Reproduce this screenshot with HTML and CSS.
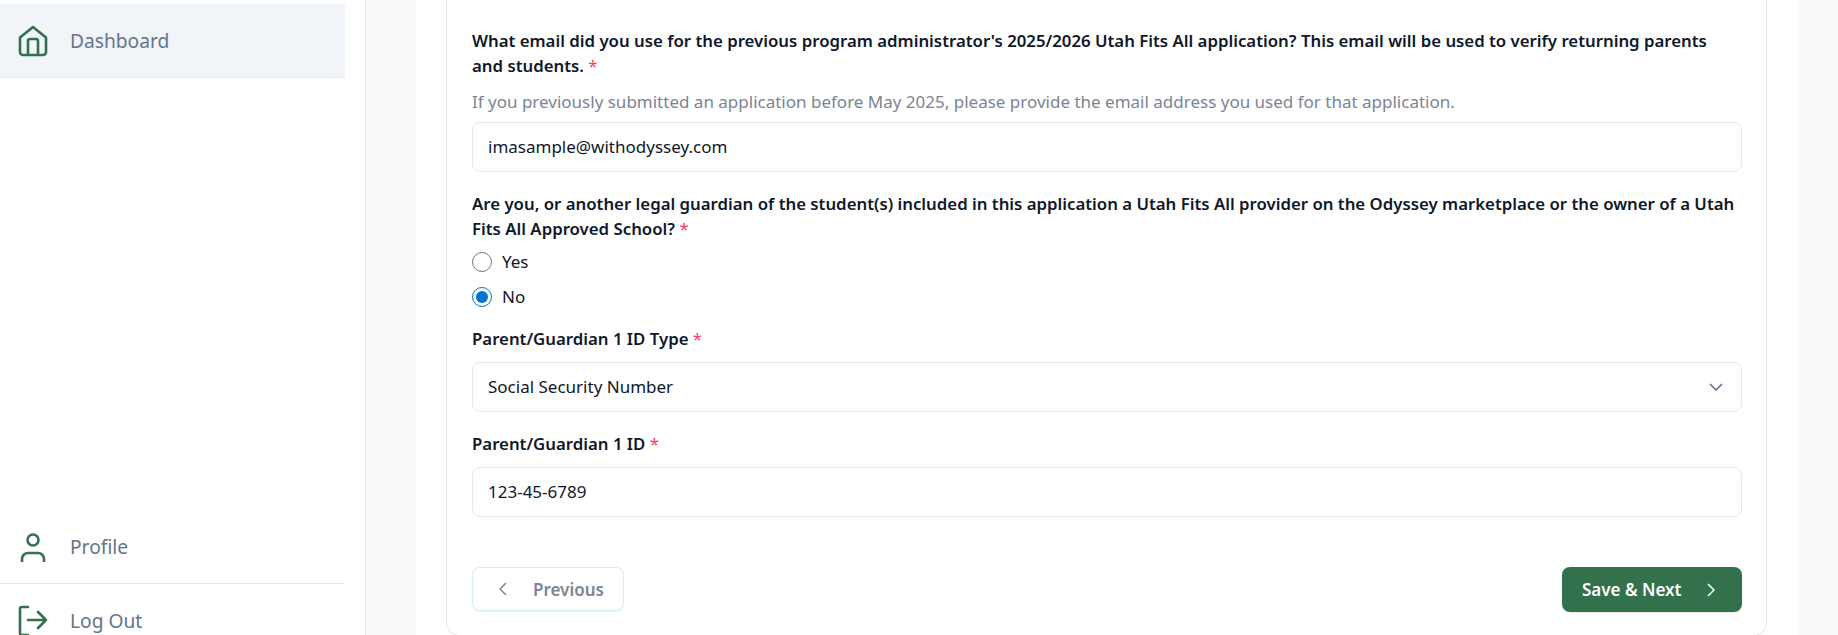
FILE: index.html
```html
<!DOCTYPE html>
<html>
	<head>
		<meta charset="utf-8">
		<title>Application</title>
		<link rel="stylesheet" href="styles.css">
	</head>
	<body>
		<div class="page">
			<aside class="sidebar">
				<a class="nav-item active" href="#">
					<svg class="nav-icon" width="30" height="32" viewBox="0 0 30 32" fill="none" stroke="#33714c" stroke-width="2.6" stroke-linejoin="round">
						<path d="M2 12.5 15 2l13 10.500V27a3 3 0 0 1-3 3H5a3 3 0 0 1-3-3z"/>
						<path d="M10 30V16a2 2 0 0 1 2-2h6a2 2 0 0 1 2 2V30"/>
					</svg>
					<span>Dashboard</span>
				</a>
				<div class="nav-bottom">
					<a class="nav-item" href="#">
						<svg class="nav-icon" width="30" height="32" viewBox="0 0 30 32" fill="none" stroke="#33714c" stroke-width="2.600">
							<circle cx="15" cy="9" r="5.500"/>
							<path d="M4 31v-3a6 6 0 0 1 6-6h10a6 6 0 0 1 6 6v3"/>
						</svg>
						<span>Profile</span>
					</a>
					<a class="nav-item" href="#">
						<svg class="nav-icon" width="30" height="32" viewBox="0 0 30 32" fill="none" stroke="#33714c" stroke-width="2.600" stroke-linecap="round" stroke-linejoin="round">
							<path d="M10 3H4a2 2 0 0 0-2 2v24a2 2 0 0 0 2 2h6"/>
							<path d="M10 16h18M20 8l8 8-8 8"/>
						</svg>
						<span>Log Out</span>
					</a>
				</div>
			</aside>
			<main class="main">
				<div class="content">
					<form class="card">
						<div class="field first">
							<label class="label">What email did you use for the previous program administrator's 2025/2026 Utah Fits All application? This email will be used to verify returning parents and students. <span class="req">*</span></label>
							<p class="hint">If you previously submitted an application before May 2025, please provide the email address you used for that application.</p>
							<input class="control" type="text" value="imasample@withodyssey.com">
						</div>
						<div class="field">
							<label class="label">Are you, or another legal guardian of the student(s) included in this application a Utah Fits All provider on the Odyssey marketplace or the owner of a Utah Fits All Approved School? <span class="req">*</span></label>
							<label class="radio"><input type="radio" name="provider"> Yes</label>
							<label class="radio"><input type="radio" name="provider" checked> No</label>
						</div>
						<div class="field tight">
							<label class="label">Parent/Guardian 1 ID Type <span class="req">*</span></label>
							<div class="select-wrap">
								<select class="control">
									<option>Social Security Number</option>
								</select>
								<svg class="chevron" width="14" height="8" viewBox="0 0 14 8" fill="none" stroke="#5b6b85" stroke-width="1.500">
									<path d="M1 1l6 6 6-6"/>
								</svg>
							</div>
						</div>
						<div class="field id-field">
							<label class="label">Parent/Guardian 1 ID <span class="req">*</span></label>
							<input class="control" type="text" value="123-45-6789">
						</div>
						<div class="actions">
							<button class="btn btn-prev" type="button">
								<svg width="8" height="14" viewBox="0 0 8 14" fill="none" stroke="#7d8594" stroke-width="1.500"><path d="M7 1 1 7l6 6"/></svg>
								Previous
							</button>
							<button class="btn btn-next" type="button">
								Save &amp; Next
								<svg width="8" height="14" viewBox="0 0 8 14" fill="none" stroke="#fff" stroke-width="1.500"><path d="M1 1l6 6-6 6"/></svg>
							</button>
						</div>
					</form>
				</div>
			</main>
		</div>
	</body>
</html>
```

FILE: styles.css
```css
* {margin:0; padding:0; box-sizing:border-box;}
html, body {height:635px; overflow:hidden;}
body {font-family:"Noto Sans", "Open Sans", sans-serif; color:#0f172a; background:#fff;}

.page {display:flex; height:635px;}

.sidebar {width:366px; height:656px; flex:none; padding:4px 20px 0 0; border-right:1px solid #e2e8f0; display:flex; flex-direction:column;}
.nav-item {display:flex; align-items:center; gap:22px; height:74px; padding-left:18px; font-size:19.2px; color:#64748b; text-decoration:none;}
.nav-item.active {background:#f1f4f9; border-bottom:1px solid #e2e8f0;}
.nav-bottom {margin-top:auto;}
.nav-bottom .nav-item:first-child {border-bottom:1px solid #e2e8f0;}
.nav-bottom .nav-item:last-child {height:72px;}
.nav-icon {flex:none;}

.main {flex:1; background:#f8f9fb; padding:0 40px 0 50px;}
.content {background:#fff; height:100%; padding:0 31px 0 30px;}
.card {height:636px; padding:0 24px 0 25px; border:1px solid #e2e8f0; border-top:0; border-radius:0 0 14px 14px;}

.field {padding-top:19px;}
.field.first {padding-top:28px;}
.field.tight {padding-top:12px;}
.label {display:block; font-size:16.8px; line-height:25px; font-weight:600; color:#0f172a;}
.req {color:#f43f5e; font-weight:400;}
.hint {margin-top:11px; font-size:17px; line-height:25px; color:#7b8494;}

.control {display:block; width:100%; height:50px; margin-top:8px; padding:0 15px 2px; font:17px "Noto Sans", "Open Sans", sans-serif; color:#0f172a; background:#fff; border:1px solid #e2e8f0; border-radius:8px; outline:none; appearance:none;}
.field.tight .control {margin-top:11px;}
.id-field {padding-top:19px;}
.id-field .control {margin-top:11px;}

.radio {display:flex; align-items:center; gap:10px; height:35px; font-size:17px;}
.field .label + .radio {margin-top:3px;}
.radio input {width:20px; height:20px; accent-color:#0075d4; margin:0;}

.select-wrap {position:relative;}
.chevron {position:absolute; right:19px; top:21px;}

.actions {display:flex; justify-content:space-between; margin-top:50px;}
.btn {display:flex; align-items:center; height:45px; font:600 17px "Noto Sans", "Open Sans", sans-serif; border-radius:8px; cursor:pointer;}
.btn-prev {width:152px; height:44px; padding-left:26px; gap:26px; color:#7d8594; background:#fff; border:1px solid #d5f0e3; box-shadow:0 1px 2px rgba(15,23,42,0.06);}
.btn-next {width:180px; padding-left:20px; gap:25px; color:#fff; background:#33714c; border:0; box-shadow:0 1px 2px rgba(15,23,42,0.1);}
```
